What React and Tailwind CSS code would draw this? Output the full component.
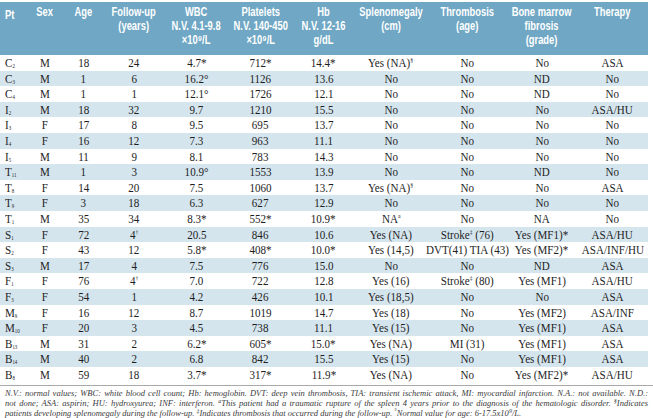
import React from 'react'

const cols = 'grid grid-cols-[27px_36px_41px_60px_65px_63px_63px_72px_80px_70px_71px]'

const head = [
  ['Pt'],
  ['Sex'],
  ['Age'],
  ['Follow-up', '(years)'],
  ['WBC', 'N.V. 4.1-9.8', '×10⁹/L'],
  ['Platelets', 'N.V. 140-450', '×10⁹/L'],
  ['Hb', 'N.V. 12-16', 'g/dL'],
  ['Splenomegaly', '(cm)'],
  ['Thrombosis', '(age)'],
  ['Bone marrow', 'fibrosis', '(grade)'],
  ['Therapy'],
]

// Pt as [letter, subscript]; "^" marks a superscript
const rows = [
  [['C', '2'], 'M', '18', '24', '4.7*', '712*', '14.4*', 'Yes (NA)^§', 'No', 'No', 'ASA'],
  [['C', '3'], 'M', '1', '6', '16.2°', '1126', '13.6', 'No', 'No', 'ND', 'No'],
  [['C', '4'], 'M', '1', '1', '12.1°', '1726', '12.1', 'No', 'No', 'ND', 'No'],
  [['I', '2'], 'M', '18', '32', '9.7', '1210', '15.5', 'No', 'No', 'No', 'ASA/HU'],
  [['I', '3'], 'F', '17', '8', '9.5', '695', '13.7', 'No', 'No', 'No', 'No'],
  [['I', '4'], 'F', '16', '12', '7.3', '963', '11.1', 'No', 'No', 'No', 'No'],
  [['I', '5'], 'M', '11', '9', '8.1', '783', '14.3', 'No', 'No', 'No', 'No'],
  [['T', '11'], 'M', '1', '3', '10.9°', '1553', '13.9', 'No', 'No', 'ND', 'No'],
  [['T', '8'], 'F', '14', '20', '7.5', '1060', '13.7', 'Yes (NA)^§', 'No', 'No', 'ASA'],
  [['T', '9'], 'F', '3', '18', '6.3', '627', '12.9', 'No', 'No', 'No', 'No'],
  [['T', '1'], 'M', '35', '34', '8.3*', '552*', '10.9*', 'NA^a', 'No', 'NA', 'No'],
  [['S', '1'], 'F', '72', '4^†', '20.5', '846', '10.6', 'Yes (NA)', 'Stroke^‡^ (76)', 'Yes (MF1)*', 'ASA/HU'],
  [['S', '2'], 'F', '43', '12', '5.8*', '408*', '10.0*', 'Yes (14,5)', 'DVT(41) TIA (43)', 'Yes (MF2)*', 'ASA/INF/HU'],
  [['S', '3'], 'M', '17', '4', '7.5', '776', '15.0', 'No', 'No', 'ND', 'ASA'],
  [['F', '1'], 'F', '76', '4^†', '7.0', '722', '12.8', 'Yes (16)', 'Stroke^‡^ (80)', 'Yes (MF1)', 'ASA/HU'],
  [['F', '3'], 'F', '54', '1', '4.2', '426', '10.1', 'Yes (18,5)', 'No', 'No', 'ASA'],
  [['M', '9'], 'F', '16', '12', '8.7', '1019', '14.7', 'Yes (18)', 'No', 'Yes (MF2)', 'ASA/INF'],
  [['M', '10'], 'F', '20', '3', '4.5', '738', '11.1', 'Yes (15)', 'No', 'Yes (MF1)', 'ASA'],
  [['B', '13'], 'M', '31', '2', '6.2*', '605*', '15.0*', 'Yes (NA)', 'MI (31)', 'Yes (MF1)', 'ASA'],
  [['B', '14'], 'M', '40', '2', '6.8', '842', '15.5', 'Yes (15)', 'No', 'Yes (MF1)', 'ASA'],
  [['B', '8'], 'M', '59', '18', '3.7*', '317*', '11.9*', 'Yes (NA)', 'No', 'Yes (MF2)*', 'ASA/HU'],
]

const Text = ({ value }) => {
  const parts = value.split('^')
  return parts.map((p, i) =>
    i % 2 === 1 ? (
      <sup key={i} className="text-[7px] top-[-5px]">{p}</sup>
    ) : (
      <React.Fragment key={i}>{p}</React.Fragment>
    )
  )
}

const serif = "font-['Liberation_Serif',serif]"

function Row({ row, striped }) {
  const [pt, ...rest] = row
  return (
    <div className={`${cols} h-[15.6px] items-center ${striped ? 'bg-[#d5e5ee]' : 'bg-white'} ${serif} text-[13.5px] text-[#1e1e1e] leading-none`}>
      <div className="pl-[5px]">
        <span className="inline-block origin-left scale-x-[0.82]">
          {pt[0]}
          <sub className="text-[6px] align-baseline relative top-[1px]">{pt[1]}</sub>
        </span>
      </div>
      {rest.map((v, i) => (
        <div key={i} className="flex justify-center whitespace-nowrap">
          <span className="inline-block scale-x-[0.82]">
            <Text value={v} />
          </span>
        </div>
      ))}
    </div>
  )
}

export default function App() {
  return (
    <div className="w-[653px] h-[418px] bg-white overflow-hidden">
      <div className={`${cols} w-[648px] mt-[2px] h-[53px] bg-[#6fa7c4] text-white font-['Liberation_Sans',sans-serif] font-bold text-[13px] pt-[3px]`}>
        {head.map((lines, i) => (
          <div key={i} className={i === 0 ? 'pl-[5px]' : 'flex justify-center whitespace-nowrap'}>
            <div className={`inline-block scale-x-[0.72] ${i === 0 ? 'origin-left' : 'text-center'}`}>
              {lines.map((l) => (
                <div key={l} className="leading-[14px]">{l}</div>
              ))}
            </div>
          </div>
        ))}
      </div>
      <div className="w-[648px]">
        {rows.map((r, i) => (
          <Row key={i} row={r} striped={i % 2 === 1} />
        ))}
      </div>
      <div className="mt-[3px] border-t border-[#a9a9a9] pt-[2px] px-[5px] font-['Liberation_Serif',serif] italic text-[8.5px] leading-[10px] text-[#3a3a3a]">
        <div className="whitespace-nowrap text-justify [text-align-last:justify]">
          N.V.: normal values; WBC: white blood cell count; Hb: hemoglobin. DVT: deep vein thrombosis, TIA: transient ischemic attack, MI: myocardial infarction. N.A.: not available. N.D.:
        </div>
        <div className="whitespace-nowrap text-justify [text-align-last:justify]">
          not done; ASA: aspirin; HU: hydroxyurea; INF: interferon. <sup className="text-[6px]">a</sup>This patient had a traumatic rupture of the spleen 4 years prior to the diagnosis of the hematologic disorder. <sup className="text-[6px]">§</sup>Indicates
        </div>
        <div>
          patients developing splenomegaly during the follow-up. <sup className="text-[6px]">‡</sup>Indicates thrombosis that occurred during the follow-up. <sup className="text-[6px]">°</sup>Normal value for age: 6-17.5x10<sup className="text-[6px]">9</sup>/L.
        </div>
      </div>
    </div>
  )
}
